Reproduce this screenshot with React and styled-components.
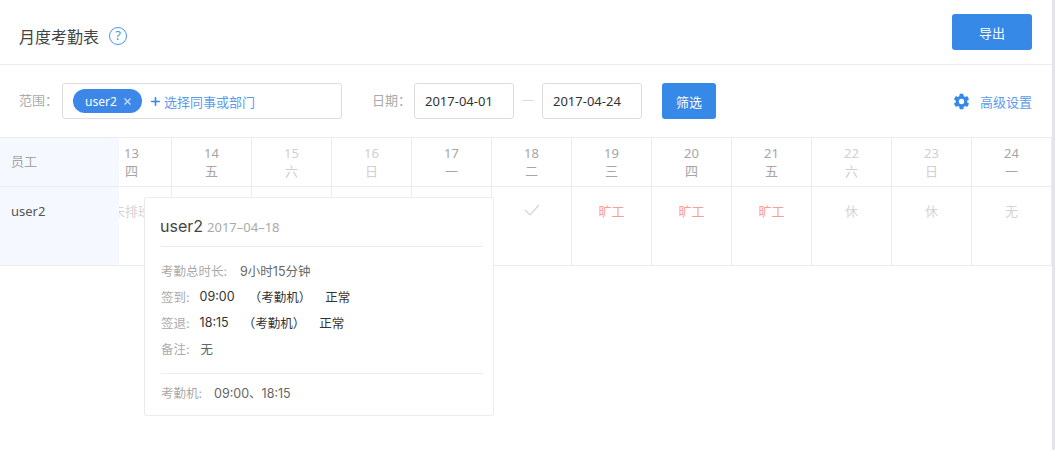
import React from "react";
import styled, { createGlobalStyle } from "styled-components";
import { IoSettingsSharp } from "react-icons/io5";
import { Plus as PlusIcon, X } from "lucide-react";

const days = [
  { date: 13, week: "四", text: "未排班", kind: "none" },
  { date: 14, week: "五" },
  { date: 15, week: "六", off: true },
  { date: 16, week: "日", off: true },
  { date: 17, week: "一" },
  { date: 18, week: "二", kind: "check" },
  { date: 19, week: "三", text: "旷工", kind: "absent" },
  { date: 20, week: "四", text: "旷工", kind: "absent" },
  { date: 21, week: "五", text: "旷工", kind: "absent" },
  { date: 22, week: "六", off: true, text: "休", kind: "none" },
  { date: 23, week: "日", off: true, text: "休", kind: "none" },
  { date: 24, week: "一", text: "无", kind: "none" },
];

const App = () => {
  return (
    <Page>
      <GlobalStyle />
      <Main>
        <Header>
          <TitleWrap>
            <Title>月度考勤表</Title>
            <HelpIcon>?</HelpIcon>
          </TitleWrap>
          <ExportButton>导出</ExportButton>
        </Header>
        <FilterBar>
          <FieldLabel>范围：</FieldLabel>
          <ScopeBox>
            <Tag>
              user2
              <X size={11} strokeWidth={2.4} />
            </Tag>
            <AddLink>
              <PlusIcon size={13} strokeWidth={3} />
              选择同事或部门
            </AddLink>
          </ScopeBox>
          <DateLabel>日期：</DateLabel>
          <DateBox>2017-04-01</DateBox>
          <Dash />
          <DateBox>2017-04-24</DateBox>
          <FilterButton>筛选</FilterButton>
          <Settings>
            <IoSettingsSharp size={17} />
            <span>高级设置</span>
          </Settings>
        </FilterBar>
        <TableWrap>
          <FixedColumn>
            <FixedHead>员工</FixedHead>
            <FixedCell>user2</FixedCell>
          </FixedColumn>
          <Scroller>
            <Columns>
              {days.map((d) => (
                <Column key={d.date}>
                  <HeadCell $off={d.off}>
                    <span>{d.date}</span>
                    <span>{d.week}</span>
                  </HeadCell>
                  <BodyCell $kind={d.kind}>
                    {d.kind === "check" ? (
                      <svg width="16" height="12" viewBox="0 0 16 12">
                        <path d="M1 6l5 5 9-10" fill="none" stroke="#d4d4d4" strokeWidth="1.2" />
                      </svg>
                    ) : (
                      d.text
                    )}
                  </BodyCell>
                </Column>
              ))}
            </Columns>
          </Scroller>
          <Popover>
            <PopHead>
              <PopName>user2</PopName>
              <PopDate>2017–04–18</PopDate>
            </PopHead>
            <PopBody>
              <PopRow>
                <PopKey>考勤总时长:</PopKey>
                <PopValue $gap={13}>9小时15分钟</PopValue>
              </PopRow>
              <PopRow>
                <PopKey>签到:</PopKey>
                <PopStrong>09:00</PopStrong>
                <PopStrong $left={14}>（考勤机）</PopStrong>
                <PopStrong $left={14}>正常</PopStrong>
              </PopRow>
              <PopRow>
                <PopKey>签退:</PopKey>
                <PopStrong>18:15</PopStrong>
                <PopStrong $left={14}>（考勤机）</PopStrong>
                <PopStrong $left={14}>正常</PopStrong>
              </PopRow>
              <PopRow>
                <PopKey>备注:</PopKey>
                <PopValue $gap={11}>无</PopValue>
              </PopRow>
            </PopBody>
            <PopFoot>
              <PopKey>考勤机:</PopKey>
              <PopValue $gap={12}>09:00、18:15</PopValue>
            </PopFoot>
          </Popover>
        </TableWrap>
      </Main>
    </Page>
  );
};

const GlobalStyle = createGlobalStyle`
  html, body {
    margin: 0;
    padding: 0;
    background: #fff;
    overflow: hidden;
  }
  * {
    box-sizing: border-box;
  }
`;

const Page = styled.div`
  width: 1055px;
  height: 450px;
  display: flex;
  overflow: hidden;
  border-right: 3px solid #e4e4ec;
  background: #fff;
  font-family: "Noto Sans", "Noto Sans CJK SC", sans-serif;
  font-size: 13px;
  color: #333;
`;

const Main = styled.div`
  flex: 1;
  min-width: 0;
`;

const Header = styled.div`
  height: 65px;
  padding: 14px 20px 0 19px;
  display: flex;
  justify-content: space-between;
  align-items: flex-start;
  border-bottom: 1px solid #ececec;
`;

const TitleWrap = styled.div`
  display: flex;
  align-items: center;
  gap: 10px;
  height: 44px;
`;

const Title = styled.h1`
  margin: 0;
  font-size: 16px;
  font-weight: 400;
  color: #444;
`;

const HelpIcon = styled.span`
  width: 18px;
  height: 18px;
  border: 1.3px solid #4a93e8;
  border-radius: 50%;
  color: #4a93e8;
  font-size: 13px;
  line-height: 15px;
  text-align: center;
`;

const ExportButton = styled.button`
  width: 80px;
  height: 36px;
  border: 0;
  border-radius: 3px;
  background: #3689e6;
  color: #fff;
  font: inherit;
`;

const FilterBar = styled.div`
  height: 72px;
  padding: 18px 20px 0 19px;
  display: flex;
  align-items: flex-start;
`;

const FieldLabel = styled.span`
  width: 43px;
  line-height: 35px;
  color: #aaa;
  white-space: nowrap;
`;

const ScopeBox = styled.div`
  width: 280px;
  height: 36px;
  border: 1px solid #ddd;
  border-radius: 3px;
  padding: 6px 10px;
  display: flex;
  align-items: center;
`;

const Tag = styled.span`
  width: 69px;
  height: 24px;
  padding-left: 12px;
  border-radius: 12px;
  background: #3d87e8;
  color: #fff;
  font-size: 12px;
  display: flex;
  align-items: center;
  gap: 5px;
  white-space: nowrap;
  svg {
    color: #d5e5fa;
  }
`;

const AddLink = styled.span`
  margin-left: 7px;
  color: #5b9bea;
  display: flex;
  align-items: center;
  gap: 2px;
  white-space: nowrap;
  svg {
    color: #3689e6;
  }
`;

const DateLabel = styled(FieldLabel)`
  margin-left: 30px;
  width: 42px;
`;

const DateBox = styled.div`
  width: 100px;
  height: 36px;
  border: 1px solid #ddd;
  border-radius: 3px;
  padding-left: 10px;
  line-height: 34px;
  color: #333;
`;

const Dash = styled.span`
  width: 12px;
  height: 1px;
  margin: 17px 8px 0;
  background: #ddd;
`;

const FilterButton = styled.button`
  width: 54px;
  height: 36px;
  margin-left: 20px;
  border: 0;
  border-radius: 3px;
  background: #3689e6;
  color: #fff;
  font: inherit;
`;

const Settings = styled.div`
  margin-left: auto;
  height: 36px;
  display: flex;
  align-items: center;
  gap: 10px;
  color: #5b9bea;
  svg {
    color: #3689e6;
  }
`;

const TableWrap = styled.div`
  position: relative;
  display: flex;
  border-top: 1px solid #ececec;
`;

const FixedColumn = styled.div`
  width: 119px;
  flex: none;
  background: #f5f9ff;
`;

const FixedHead = styled.div`
  height: 49px;
  padding-left: 11px;
  line-height: 46px;
  color: #a5a5a5;
  border-bottom: 1px solid #ececec;
`;

const FixedCell = styled.div`
  height: 79px;
  padding: 15px 0 0 11px;
  color: #555;
  line-height: 18px;
  border-bottom: 1px solid #ececec;
`;

const Scroller = styled.div`
  flex: 1;
  overflow: hidden;
`;

const Columns = styled.div`
  display: flex;
  margin-left: -27px;
`;

const Column = styled.div`
  width: 80px;
  flex: none;
  border-right: 1px solid #ececec;
`;

const HeadCell = styled.div`
  height: 49px;
  padding-top: 6px;
  display: flex;
  flex-direction: column;
  align-items: center;
  line-height: 18px;
  color: ${({ $off }) => ($off ? "#d0d0d0" : "#a5a5a5")};
  border-bottom: 1px solid #ececec;
`;

const kindColors = { absent: "#ff9c94", none: "#d4d4d4" };

const BodyCell = styled.div`
  height: 79px;
  padding-top: 15px;
  text-align: center;
  line-height: 18px;
  color: ${({ $kind }) => kindColors[$kind] || "#d4d4d4"};
  white-space: nowrap;
  border-bottom: 1px solid #ececec;
`;

const Popover = styled.div`
  position: absolute;
  left: 144px;
  top: 59px;
  width: 350px;
  height: 219px;
  padding: 0 10px 0 16px;
  background: #fff;
  border: 1px solid #ececec;
  border-radius: 2px;
  font-family: Inter, "Noto Sans CJK SC", sans-serif;
  font-size: 12.5px;
`;

const PopHead = styled.div`
  height: 49px;
  display: flex;
  align-items: baseline;
  gap: 4px;
  padding-top: 18px;
  border-bottom: 1px solid #ececec;
`;

const PopName = styled.span`
  margin-left: -1px;
  font-size: 16px;
  color: #444;
`;

const PopDate = styled.span`
  font-family: "Noto Sans", sans-serif;
  font-size: 13px;
  color: #aaa;
`;

const PopBody = styled.div`
  padding-top: 10px;
  height: 126px;
`;

const PopRow = styled.div`
  height: 26px;
  display: flex;
  align-items: center;
  white-space: nowrap;
`;

const PopKey = styled.span`
  color: #aaa;
  margin-right: 10px;
`;

const PopValue = styled.span`
  color: #666;
  margin-left: ${({ $gap }) => $gap - 10}px;
`;

const PopStrong = styled.span`
  color: #333;
  margin-left: ${({ $left }) => $left || 0}px;
`;

const PopFoot = styled.div`
  height: 37px;
  display: flex;
  align-items: center;
  border-top: 1px solid #ececec;
`;

export default App;
